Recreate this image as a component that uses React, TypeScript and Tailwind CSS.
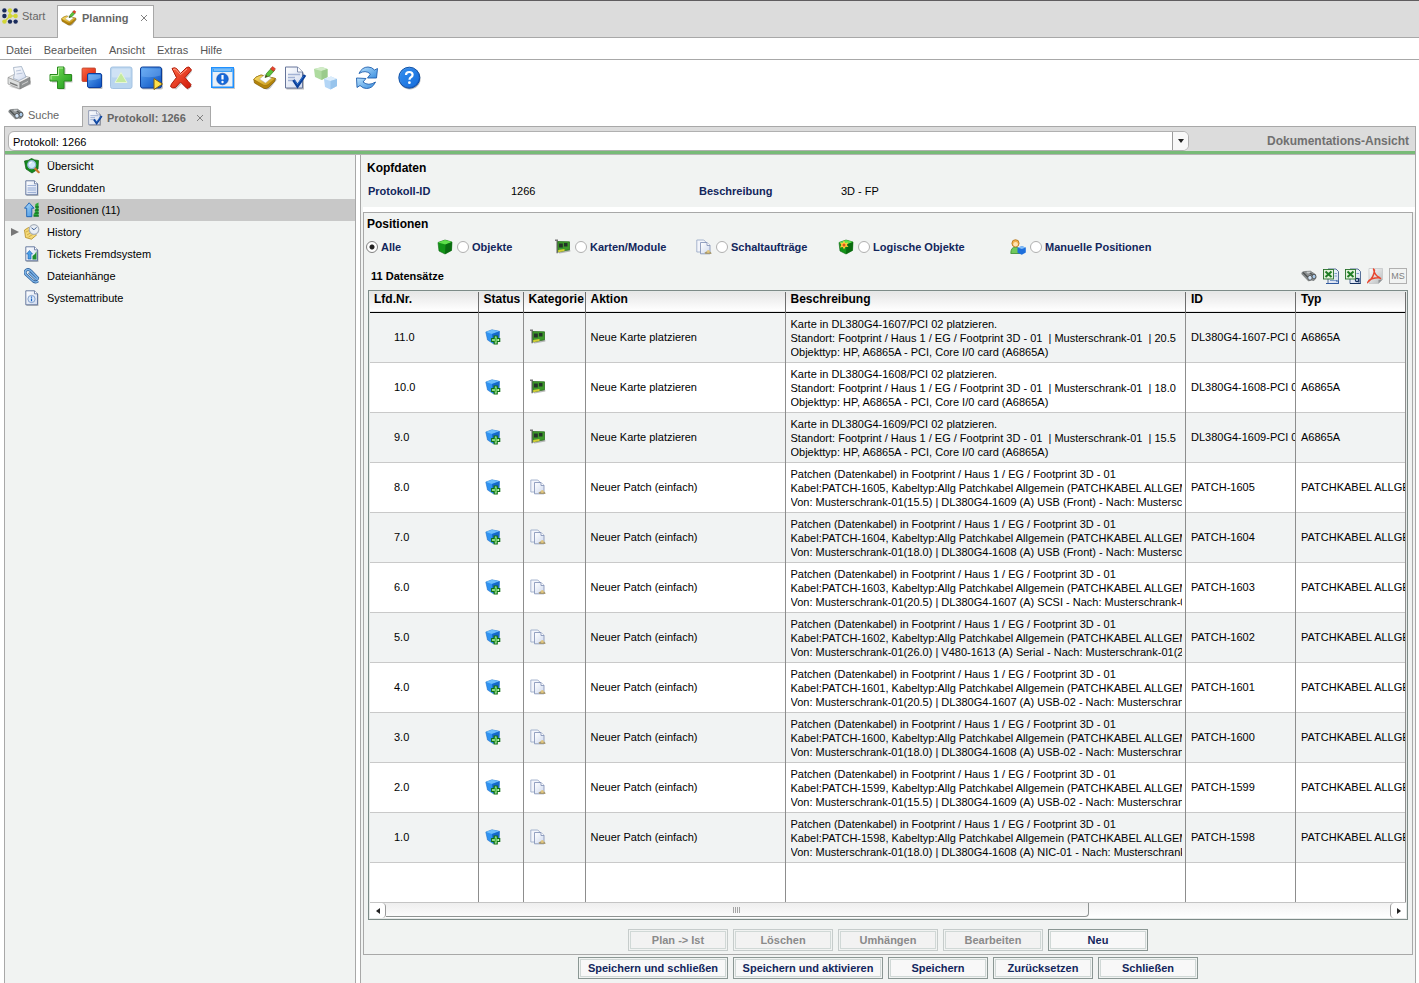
import { useState, type ReactNode } from "react";

function Svg({ size = 16, children }: { size?: 16 | 24; children: ReactNode }) {
  return (
    <svg
      viewBox={size === 24 ? "0 0 24 24" : "0 0 16 16"}
      className={size === 24 ? "block size-6 shrink-0" : "block size-4 shrink-0"}
      aria-hidden="true"
    >
      {children}
    </svg>
  );
}

function Gradient({ id, from, to }: { id: string; from: string; to: string }) {
  return (
    <linearGradient id={id} x1="0" y1="0" x2="1" y2="1">
      <stop offset="0" stopColor={from} />
      <stop offset="1" stopColor={to} />
    </linearGradient>
  );
}

function SharedGradients() {
  return (
    <svg className="absolute size-0" aria-hidden="true">
      <defs>
        <Gradient id="blue" from="#5aa5f2" to="#0a4fc0" />
        <Gradient id="sky" from="#b8e0fb" to="#3b8fe0" />
        <Gradient id="green" from="#7be05a" to="#1c9a1c" />
        <Gradient id="red" from="#ff6a45" to="#cf1708" />
        <Gradient id="paper" from="#ffffff" to="#cfd9ee" />
        <Gradient id="gold" from="#ffe673" to="#c08a08" />
        <Gradient id="metal" from="#ffffff" to="#b4b8ba" />
      </defs>
    </svg>
  );
}

/* ---------- Toolbar icons, 24px ---------- */

const PrinterIcon = () => (
  <Svg size={24}>
    <path d="M2 20.500l10 3 12-5v-4L13 19z" fill="#9b9b9b" opacity=".5" />
    <path d="M1 11.500l8-4 14 4-10 5z" fill="#f0f0f0" stroke="#999" strokeWidth=".6" />
    <path d="M1 11.500l12 5v6.500L1 18z" fill="#dcdede" stroke="#888" strokeWidth=".6" />
    <path d="M13 16.500l10-5v6L13 23z" fill="#8f9293" stroke="#777" strokeWidth=".6" />
    <path d="M6.500 1.500l8-1 4.500 10.500-7 3.500-5.500-2q2-5 0-11z" fill="url(#paper)" stroke="#8fa0b8" strokeWidth=".7" />
    <path d="M9 5l5-.8M9.500 8l6-.8" stroke="#b9c4d8" />
    <path d="M3 16l7.500 3v1.500l-7.500-3z" fill="#777" />
    <path d="M15 18.500l6-3" stroke="#d0d0d0" />
  </Svg>
);

const PlusIcon = () => (
  <Svg size={24}>
    <path d="M9.500 2h7v7h7v7.500h-7v7h-7v-7H3V9h6.500z" fill="#555" opacity=".35" />
    <path d="M8.500 1H15v7.500h7.500V15H15v7.500H8.500V15H1V8.500h7.500z" fill="url(#green)" stroke="#2a8a1e" />
    <path d="M2 13.500V9.500h7.500V2H14" fill="none" stroke="#b6f09e" />
  </Svg>
);

const CopySquaresIcon = () => (
  <Svg size={24}>
    <rect x="3" y="2" width="13.500" height="13.500" rx="1" fill="url(#red)" stroke="#b8452c" strokeWidth=".8" />
    <rect x="9.500" y="8.500" width="14" height="14.500" rx="1" fill="#555" opacity=".4" />
    <rect x="8.500" y="7.500" width="14" height="14" rx="1.500" fill="url(#blue)" stroke="#0c3fa0" />
    <path d="M9.500 9h12v3q-7 3-12 2z" fill="#a4d2fd" opacity=".4" />
  </Svg>
);

const UpDisabledIcon = () => (
  <Svg size={24}>
    <rect x="1.500" y="1" width="21.500" height="21.500" rx="2" fill="#b9d5ef" stroke="#a5c3e2" />
    <rect x="3" y="2.500" width="18.500" height="9" rx="1" fill="#cfe2f5" />
    <path d="M12 6.500l6 10H6z" fill="#c4ea9f" stroke="#e6f6d6" />
  </Svg>
);

const PlayIcon = () => (
  <Svg size={24}>
    <rect x="2.500" y="2" width="21.500" height="21.500" rx="2" fill="#555" opacity=".35" />
    <rect x="1.500" y="1" width="21" height="21" rx="2" fill="url(#blue)" stroke="#0c3d96" />
    <path d="M2.500 2.500H21.500v7q-9 3-19 1z" fill="#8fc4fa" opacity=".35" />
    <path d="M15 12.500l8.500 5.500-8.500 5.500z" fill="#ffe04a" stroke="#806010" />
  </Svg>
);

const DeleteIcon = () => (
  <Svg size={24}>
    <path d="M4 4.500l4-2 4.500 6 6.500-6 4 3-6 7.500 6 7.500-4 3.500-6.500-6-5.500 5.500-5-2.500 5.500-8z" fill="#555" opacity=".35" />
    <path
      d="M3 2.500q2.500-1.500 4.500 0l4 5 6-6 2.500-.5 2.500 3-6.500 7.500q3 4 6 7l-1 2.500-3 1.500-6.500-6.500-5 5.500q-3 1.500-5-1l1-2.500 5-6.500z"
      fill="url(#red)"
      stroke="#b01a08"
    />
    <path d="M4 3.500l2.500-.5 5 5.500L18 3" fill="none" stroke="#ffa088" />
  </Svg>
);

const AlertWindowIcon = () => (
  <Svg size={24}>
    <rect x="1.500" y="2.500" width="22.500" height="20.500" fill="#777" opacity=".4" />
    <rect x=".75" y="1.750" width="21.500" height="19.500" fill="#eaf0f6" stroke="#1e90ff" strokeWidth="1.500" />
    <path d="M1.500 2.500h20v3.500h-20z" fill="#3a9ff5" />
    <path d="M3 4h17" stroke="#b9dcfc" />
    <circle cx="11.500" cy="13" r="5.800" fill="#1668d8" stroke="#0d4cae" strokeWidth=".6" />
    <path d="M11.500 9v4.500" stroke="#fff" strokeWidth="2.200" />
    <circle cx="11.500" cy="16" r="1.200" fill="#fff" />
  </Svg>
);

const PencilNoteShapes = () => (
  <>
    <path d="M2 16.500l8-6 14 3-6.500 8.500q-2 2-4.500 1.500z" fill="#555" opacity=".4" />
    <path d="M.8 13.500Q1.500 11 8 9l14.500 3.500-1 3-6 6q-2 1.500-4.500 1l-9.500-5.500z" fill="#b58408" stroke="#7d5c08" strokeWidth=".7" />
    <path d="M.8 13.500Q1.500 11 8 9l14.500 3.500-7 6q-2 1.500-4.500 1z" fill="url(#gold)" stroke="#97700a" strokeWidth=".6" />
    <path d="M6.500 13l5.500-4.500 6.500 3.500-6 5z" fill="#fff" stroke="#a8a8a8" strokeWidth=".5" />
    <path d="M12 11.500l1.500-4 5-5.500 3 2.500-5 5.500z" fill="#5dc23c" stroke="#2b7d1b" strokeWidth=".7" />
    <path d="M17.500 3l2-2.500 3 2.300-2 2.500z" fill="#e8442c" stroke="#a82818" strokeWidth=".5" />
    <path d="M12 11.500l.9-2.500 2 1.500z" fill="#553a18" />
  </>
);

const PencilNoteIcon = () => (
  <Svg size={24}>
    <PencilNoteShapes />
  </Svg>
);

const CheckedDocShapes = () => (
  <>
    <path d="M3.500 2h12.500l5 5v16.500H3.500z" fill="#555" opacity=".4" />
    <path d="M2.500 1h12l5 5v16h-17z" fill="url(#paper)" stroke="#66759a" />
    <path d="M14.500 1v5h5" fill="#fff" stroke="#66759a" strokeWidth=".8" />
    <path d="M5 8.500h12M5 11.500h7M5 14.500h6" stroke="#a2b2d4" strokeWidth="1.500" />
    <path d="M10.500 14l4 6L22 9" fill="none" stroke="#0a3f98" strokeWidth="3" />
    <path d="M11.500 14.500l3 4L20.500 10" fill="none" stroke="#3a80dc" strokeWidth=".8" />
  </>
);

const CheckedDocIcon = () => (
  <Svg size={24}>
    <CheckedDocShapes />
  </Svg>
);

const CubesDisabledIcon = () => (
  <Svg size={24}>
    <path d="M1 3l8-2 5.500 2v8l-6 3L2 11z" fill="#aedb9f" />
    <path d="M1 3l8-2 5.500 2-6 2z" fill="#d2ecc8" />
    <path d="M8.500 5l6-2v8l-6 3z" fill="#9acb8b" />
    <path d="M11 13l7-2.500 6 2.500v7l-6.500 3.500L12 21z" fill="#b4d6f6" />
    <path d="M11 13l7-2.500 6 2.500-6.500 2z" fill="#dcedfc" />
    <path d="M17.500 15l6.500-2v7l-6.500 3.500z" fill="#98c4ec" />
  </Svg>
);

const RefreshIcon = () => (
  <Svg size={24}>
    <path
      d="M4 7.500Q7 1 13 1q4 0 6.500 3l3-1.500-1 9.500H12.500l3-4Q10.500 3.500 4 7.500z"
      fill="url(#sky)"
      stroke="#1f5fae"
      strokeWidth=".9"
      strokeLinejoin="round"
    />
    <path
      d="M20.500 16Q17.500 22.500 11.500 22.500 8 22.500 5 19.500L2 21.500l-.5-9.500 9.500.500-3 3.500q5.500 4.500 12.500 0z"
      fill="url(#sky)"
      stroke="#1f5fae"
      strokeWidth=".9"
      strokeLinejoin="round"
    />
  </Svg>
);

const HelpIcon = () => (
  <Svg size={24}>
    <circle cx="12.800" cy="12.700" r="10.800" fill="#555" opacity=".4" />
    <circle cx="12.300" cy="11.700" r="10.500" fill="url(#blue)" stroke="#0b50a8" />
    <circle cx="12.300" cy="11.700" r="9.300" fill="#1d80ec" opacity=".6" />
    <path d="M9 9q0-3 3.300-3t3.300 2.700q0 1.500-1.600 2.500-1.500 1-1.500 2.500" fill="none" stroke="#fff" strokeWidth="2.200" />
    <circle cx="12.400" cy="16.700" r="1.400" fill="#fff" />
  </Svg>
);

/* ---------- Small icons, 16px ---------- */

const startDots = [
  ["#1a2c5c", "#d2d638", "#1a2c5c"],
  ["#1a2c5c", "#d2d638", "#d2d638"],
  ["#d2d638", "#1a2c5c", "#1a2c5c"],
];

const StartIcon = () => (
  <Svg>
    <path d="M8 2.500v5.500h5.500M8 8L2.500 13.500" fill="none" stroke="#d2d638" strokeWidth="1.500" />
    {startDots.map((row, y) =>
      row.map((fill, x) => (
        <circle key={`${x}-${y}`} cx={2.400 + x * 5.600} cy={2.400 + y * 5.600} r="2.200" fill={fill} />
      )),
    )}
  </Svg>
);

const PlanningIcon = () => (
  <svg viewBox="0 0 24 24" className="block size-4 shrink-0" aria-hidden="true">
    <PencilNoteShapes />
  </svg>
);

const ProtocolIcon = () => (
  <svg viewBox="0 0 24 24" className="block size-4 shrink-0" aria-hidden="true">
    <CheckedDocShapes />
  </svg>
);

const BinocularsIcon = () => (
  <Svg>
    <path d="M.8 6Q.5 3.500 3.500 3.500l6-.3 5 3.300.5 3.500-2 2.500-3-.5-2.500 1z" fill="#8d9192" stroke="#6c7071" strokeWidth=".7" />
    <path d="M2 4.500l5 5M7 4l5 3" stroke="#4e5253" strokeWidth="1.300" />
    <ellipse cx="7.500" cy="4.400" rx="2" ry="1" fill="#c9cccd" />
    <ellipse cx="9" cy="9.800" rx="2.200" ry="2.400" fill="#cfe2f5" stroke="#555" strokeWidth=".9" />
    <ellipse cx="13" cy="8.600" rx="1.900" ry="2.300" fill="#a9c9e8" stroke="#555" strokeWidth=".9" />
  </Svg>
);

const OverviewIcon = () => (
  <Svg>
    <path d="M.5 3Q5 2.500 7.500.5q3 1.800 7 2L14 11l-6 4-6-4z" fill="#148a1d" stroke="#0c5a12" strokeWidth=".7" />
    <path d="M10.500 10l4.200 4.200" stroke="#c9742a" strokeWidth="2.200" strokeLinecap="round" />
    <circle cx="7.700" cy="6.700" r="4" fill="#cfe8fa" stroke="#8fb3d2" strokeWidth="1.200" />
    <path d="M5.500 6.200q.4-1.800 2.200-2" fill="none" stroke="#fff" strokeWidth="1.200" />
  </Svg>
);

const PageIcon = ({ children }: { children?: ReactNode }) => (
  <Svg>
    <path d="M2.500 1.500h9l3 3V16h-12z" fill="#555" opacity=".35" />
    <path d="M1.800.8h8.700l3 3v11H1.800z" fill="url(#paper)" stroke="#5b6f98" strokeWidth=".9" />
    <path d="M10.500.8v3h3" fill="#fff" stroke="#5b6f98" strokeWidth=".8" />
    {children}
  </Svg>
);

const BaseDataIcon = () => (
  <PageIcon>
    <path d="M3.500 5.500H12M3.500 12.500H12" stroke="#9fb2d6" />
    <rect x="3.500" y="7" width="8.500" height="4" fill="#bccbe6" />
  </PageIcon>
);

const PositionsIcon = () => (
  <Svg>
    <path d="M5.200.8l4.800 5.400H7.800v8.500H2.700V6.200H.5z" fill="url(#sky)" stroke="#145fb4" strokeWidth=".9" />
    <path d="M11.500 2l3-1.500v14H9.800L9.500 12l2-1.500-1-2 1.500-1.500-1-2z" fill="#2aa838" />
    <path d="M9.500 14h5.500M10.500 11h4.500M11 8h4M11.500 5H15" stroke="#0b5f18" strokeWidth="1.200" />
  </Svg>
);

const TicketsIcon = () => (
  <PageIcon>
    <path d="M5.500 4.500L8.500 8H7v5H4V8H2.500z" fill="#4a9fe6" stroke="#145fb4" strokeWidth=".6" />
    <path d="M12.500 5v8.500H8.500V10L11 8z" fill="#1d8f2c" />
  </PageIcon>
);

const HistoryIcon = () => (
  <Svg>
    <path d="M.5 6l4-2.500 8 7.500-5 4.200-6-1.700z" fill="#f3d876" stroke="#b48b20" strokeWidth=".8" />
    <path d="M2 8l4-2M3 11l5-3M4.500 13l5-3" stroke="#c49b35" strokeWidth=".7" />
    <circle cx="10" cy="5.500" r="4.800" fill="#e9eef4" stroke="#a8b0ba" strokeWidth="1.200" />
    <path d="M7.500 3.800l2.500 2 2.500-2.500" fill="none" stroke="#3d5f94" />
  </Svg>
);

const PaperclipIcon = () => (
  <Svg>
    <path
      d="M5 4.500l7 6.500q1.500.5 1.700-1L7 3Q4 .2 1.800 2.500q-1.500 2 .2 4l7 6.500q3 2 5 0"
      fill="none"
      stroke="#2e5f98"
      strokeWidth="2.800"
    />
    <path
      d="M5 4.500l7 6.500q1.500.5 1.700-1L7 3Q4 .2 1.800 2.500q-1.500 2 .2 4l7 6.500q3 2 5 0"
      fill="none"
      stroke="#7eb4e8"
      strokeWidth="1.500"
    />
  </Svg>
);

const SystemIcon = () => (
  <PageIcon>
    <circle cx="7.500" cy="9" r="3.600" fill="#dbe9fa" stroke="#6f90c0" strokeWidth=".8" />
    <path d="M7.500 8.500v2.800M7.500 6.500v1.200" stroke="#1a5fc0" strokeWidth="1.200" />
  </PageIcon>
);

const GreenCube = () => (
  <>
    <path d="M1 3.500L8 1l7 2-.5 8.500L8 15 2 12z" fill="#129417" stroke="#0b6410" strokeWidth=".6" />
    <path d="M1 3.500L8 1l7 2-6.500 2.500z" fill="#5fe04b" />
    <path d="M8.500 5.500L15 3l-.5 8.500L8 15z" fill="#0a6b10" />
  </>
);

const ObjectIcon = () => (
  <Svg>
    <GreenCube />
  </Svg>
);

const LogicalObjectIcon = () => (
  <Svg>
    <GreenCube />
    <path d="M6 1.500l1.200 2.500 3-.5-1.300 2.500L10.500 8l-3-.2L6 10.500 4.800 8 2 8.500 3.300 6 2 3.800l2.700.2z" fill="#ffc93c" />
    <circle cx="6" cy="6" r="1.500" fill="#e0551c" />
  </Svg>
);

const CardIcon = () => (
  <Svg>
    <path d="M0 1.300h2.200v13" fill="none" stroke="#777" strokeWidth="1.600" />
    <path d="M3.500 12.500l11-2 .8.800v1.200l-11 2z" fill="#777" opacity=".5" />
    <path d="M2.800 2.500l11.700.3v8l-4 .7-7.500 1.500z" fill="#3d9a2a" stroke="#1f6414" strokeWidth=".7" />
    <rect x="4" y="4.500" width="3.800" height="4" fill="#24342a" />
    <rect x="9" y="4" width="3.500" height="3.500" fill="#24342a" />
    <path d="M3.200 11l6.300-.9v2l-6.300 1.200z" fill="#d6d036" />
  </Svg>
);

const OrderIcon = () => (
  <Svg>
    <path d="M.8 1h7l2 2v10h-9z" fill="#f3f5fb" stroke="#93a3c4" strokeWidth=".8" />
    <path d="M4.500 3.500H11l3 3v8.300H4.500z" fill="url(#paper)" stroke="#7b8cb2" strokeWidth=".8" />
    <path d="M11 3.500v3h3" fill="#fff" stroke="#7b8cb2" strokeWidth=".8" />
    <path d="M8.500 13.500l3-1.500 3.500 1 .5 2h-6z" fill="#a89a74" />
    <circle cx="12.300" cy="12.500" r="1.500" fill="#e0c47c" />
  </Svg>
);

const ManualIcon = () => (
  <Svg>
    <path d="M.8 14.500Q.8 8 5.500 8t5 6.500z" fill="#6fc95c" stroke="#388a2c" strokeWidth=".8" />
    <circle cx="5.500" cy="4.300" r="3.600" fill="#f0b04c" stroke="#b2721b" strokeWidth=".8" />
    <circle cx="5.600" cy="5.200" r="2.300" fill="#ffe2b2" />
    <path d="M7.500 8.500L12 7.200l3.800 1.300v5l-4 2.200-4.300-2z" fill="#1e6fdc" />
    <path d="M7.500 8.500L12 7.200l3.800 1.300-4 1.500z" fill="#82bdf8" />
  </Svg>
);

const NewCubeIcon = () => (
  <Svg>
    <path d="M.8 3L7 .8l7.500 1.500-.5 9.200L8 14.500 2.500 11z" fill="#2f92f2" stroke="#1467bd" strokeWidth=".5" />
    <path d="M.8 3L7 .8l7.500 1.500L7 5z" fill="#6cbcfb" />
    <path d="M7 5l7.500-2.700-.5 9.200-6 3z" fill="#1668cc" />
    <path d="M9.200 7h3v2.500h2.500v3h-2.500V15h-3v-2.500H6.700v-3h2.500z" fill="#c9f5b9" stroke="#0c6f12" strokeWidth="1.200" />
    <path d="M10.700 8.500V13.500M8.200 11h5" stroke="#3fb43a" strokeWidth="1" />
  </Svg>
);

const Spreadsheet = ({ children }: { children: ReactNode }) => (
  <Svg>
    <path d="M5 1h8l2.500 2.500v12H5z" fill="url(#paper)" stroke="#46628f" strokeWidth=".9" />
    {children}
    <rect x=".5" y="1.500" width="10" height="9.500" fill="#e4f2dc" stroke="#27702a" strokeWidth=".9" />
    <path d="M2.500 3.500l6 5.500M8.500 3.500l-6 5.500" stroke="#1f7d24" strokeWidth="2" />
  </Svg>
);

const ExcelIcon = () => (
  <Spreadsheet>
    <path d="M11.500 5.500H14M11.500 8H14M7 12.500h7" stroke="#7f9dcb" />
    <path d="M13 13h2.500v2.500H3" fill="none" stroke="#2f59a0" />
  </Spreadsheet>
);

const ExcelAllIcon = () => (
  <Spreadsheet>
    <path d="M11.500 5.500H14" stroke="#7f9dcb" />
    <circle cx="12" cy="12" r="1.600" fill="none" stroke="#14315f" strokeWidth="1.200" />
    <path d="M13.900 10v4.500M5 15.500h10.500" stroke="#14315f" strokeWidth="1.200" />
  </Spreadsheet>
);

const PdfIcon = () => (
  <Svg>
    <path d="M2 .5h13.500v11l-4 4H2z" fill="url(#metal)" stroke="#c2c4c6" strokeWidth=".7" />
    <path d="M15.500 11.500l-4 4v-3.500z" fill="#8f9395" />
    <path
      d="M6.500 1q1 6.500 7 9.500M7.500 2Q7 9.500 1 14q1.500-4 11.500-4.500"
      fill="none"
      stroke="#e8452e"
      strokeWidth="1.500"
      strokeLinecap="round"
    />
  </Svg>
);

/* ---------- Data ---------- */

type Row = {
  nr: string;
  kind: "card" | "patch";
  aktion: string;
  lines: [string, string, string];
  id: string;
  typ: string;
};

const card = (nr: string, device: string, unit: string): Row => ({
  nr,
  kind: "card",
  aktion: "Neue Karte platzieren",
  lines: [
    `Karte in ${device}/PCI 02 platzieren.`,
    `Standort: Footprint / Haus 1 / EG / Footprint 3D - 01  | Musterschrank-01  | ${unit}`,
    "Objekttyp: HP, A6865A - PCI, Core I/0 card (A6865A)",
  ],
  id: `${device}-PCI 02`,
  typ: "A6865A",
});

const patch = (nr: string, cable: string, route: string): Row => ({
  nr,
  kind: "patch",
  aktion: "Neuer Patch (einfach)",
  lines: [
    "Patchen (Datenkabel) in Footprint / Haus 1 / EG / Footprint 3D - 01",
    `Kabel:PATCH-${cable}, Kabeltyp:Allg Patchkabel Allgemein (PATCHKABEL ALLGEME`,
    `Von: Musterschrank-01${route}`,
  ],
  id: `PATCH-${cable}`,
  typ: "PATCHKABEL ALLGE",
});

const rows: Row[] = [
  card("11.0", "DL380G4-1607", "20.5"),
  card("10.0", "DL380G4-1608", "18.0"),
  card("9.0", "DL380G4-1609", "15.5"),
  patch("8.0", "1605", "(15.5) | DL380G4-1609 (A) USB (Front) - Nach: Mustersc"),
  patch("7.0", "1604", "(18.0) | DL380G4-1608 (A) USB (Front) - Nach: Mustersc"),
  patch("6.0", "1603", "(20.5) | DL380G4-1607 (A) SCSI - Nach: Musterschrank-0"),
  patch("5.0", "1602", "(26.0) | V480-1613 (A) Serial - Nach: Musterschrank-01(2"),
  patch("4.0", "1601", "(20.5) | DL380G4-1607 (A) USB-02 - Nach: Musterschran"),
  patch("3.0", "1600", "(18.0) | DL380G4-1608 (A) USB-02 - Nach: Musterschran"),
  patch("2.0", "1599", "(15.5) | DL380G4-1609 (A) USB-02 - Nach: Musterschran"),
  patch("1.0", "1598", "(18.0) | DL380G4-1608 (A) NIC-01 - Nach: Musterschrank"),
];

const toolbar: { label: string; icon: ReactNode; disabled?: boolean }[][] = [
  [{ label: "Drucken", icon: <PrinterIcon /> }],
  [
    { label: "Neu", icon: <PlusIcon /> },
    { label: "Kopieren", icon: <CopySquaresIcon /> },
    { label: "Nach oben", icon: <UpDisabledIcon />, disabled: true },
    { label: "Ausführen", icon: <PlayIcon /> },
    { label: "Löschen", icon: <DeleteIcon /> },
  ],
  [{ label: "Hinweise", icon: <AlertWindowIcon /> }],
  [
    { label: "Planung", icon: <PencilNoteIcon /> },
    { label: "Protokoll", icon: <CheckedDocIcon /> },
    { label: "Objekte", icon: <CubesDisabledIcon />, disabled: true },
  ],
  [{ label: "Aktualisieren", icon: <RefreshIcon /> }],
  [{ label: "Hilfe", icon: <HelpIcon /> }],
];

const navigation: { label: string; icon: ReactNode; expandable?: boolean }[] = [
  { label: "Übersicht", icon: <OverviewIcon /> },
  { label: "Grunddaten", icon: <BaseDataIcon /> },
  { label: "Positionen (11)", icon: <PositionsIcon /> },
  { label: "History", icon: <HistoryIcon />, expandable: true },
  { label: "Tickets Fremdsystem", icon: <TicketsIcon /> },
  { label: "Dateianhänge", icon: <PaperclipIcon /> },
  { label: "Systemattribute", icon: <SystemIcon /> },
];

const filters: { label: string; icon?: ReactNode }[] = [
  { label: "Alle" },
  { label: "Objekte", icon: <ObjectIcon /> },
  { label: "Karten/Module", icon: <CardIcon /> },
  { label: "Schaltaufträge", icon: <OrderIcon /> },
  { label: "Logische Objekte", icon: <LogicalObjectIcon /> },
  { label: "Manuelle Positionen", icon: <ManualIcon /> },
];

const columns = ["Lfd.Nr.", "Status", "Kategorie", "Aktion", "Beschreibung", "ID", "Typ"];

/* ---------- Parts ---------- */

function CloseButton() {
  return (
    <button type="button" aria-label="Schließen" className="flex size-3 items-center justify-center">
      <svg viewBox="0 0 8 8" className="size-2" aria-hidden="true">
        <path d="M1 1l6 6M7 1L1 7" stroke="#808080" strokeWidth="1" />
      </svg>
    </button>
  );
}

function ActionButton({ label, wide, disabled }: { label: string; wide?: boolean; disabled?: boolean }) {
  return (
    <button
      type="button"
      disabled={disabled}
      className={`${wide ? "w-[150px]" : "w-[100px]"} h-[22px] border p-px font-bold whitespace-nowrap ${
        disabled ? "border-[#c6cccb] text-[#8a8a8a]" : "border-[#8b9794] text-[#12265c]"
      }`}
    >
      <span
        className={`flex h-full items-center justify-center border border-[#d0d8d6] ${
          disabled ? "bg-[#f2f2f2]" : "bg-[#f8f8f8]"
        }`}
      >
        {label}
      </span>
    </button>
  );
}

function Positions() {
  return (
    <div className="border border-[#7d8b88] bg-[#e6e9e8] p-px">
      <div className="overflow-hidden">
        <table className="w-full table-fixed border-collapse text-left">
          <colgroup>
            <col className="w-[108px]" />
            <col className="w-[45px]" />
            <col className="w-[62px]" />
            <col className="w-[200px]" />
            <col />
            <col className="w-[110px]" />
            <col className="w-[110px]" />
          </colgroup>
          <thead>
            <tr className="h-5 border-b border-black bg-linear-to-b from-[#e6e6e6] to-white">
              {columns.map((c, i) => (
                <th
                  key={c}
                  scope="col"
                  className={`overflow-hidden border-r border-[#6e6e6e] p-0 align-top text-[12px] font-bold whitespace-nowrap ${
                    i === 0 ? "pl-1" : "pl-[5px]"
                  }`}
                >
                  {c}
                </th>
              ))}
            </tr>
          </thead>
          <tbody>
            {rows.map((r) => (
              <tr key={r.nr} className="h-[50px] border-b border-[#c9c9c9] odd:bg-[#f1f3f3] even:bg-white">
                <td className="border-r border-[#8d8d8d] p-0 pl-6">{r.nr}</td>
                <td className="border-r border-[#8d8d8d] p-0 pl-1.5">
                  <NewCubeIcon />
                </td>
                <td className="border-r border-[#8d8d8d] p-0 pl-1.5">
                  {r.kind === "card" ? <CardIcon /> : <OrderIcon />}
                </td>
                <td className="border-r border-[#8d8d8d] p-0 pl-[5px]">{r.aktion}</td>
                <td className="border-r border-[#8d8d8d] p-0 pr-[3px] pl-[5px]">
                  <div className="pt-px">
                    {r.lines.map((l) => (
                      <div key={l} className="overflow-hidden whitespace-pre">
                        {l}
                      </div>
                    ))}
                  </div>
                </td>
                <td className="overflow-hidden border-r border-[#8d8d8d] p-0 pl-[5px] whitespace-nowrap">{r.id}</td>
                <td className="overflow-hidden border-r border-[#8d8d8d] p-0 pl-[5px] whitespace-nowrap">{r.typ}</td>
              </tr>
            ))}
            <tr className="h-10 bg-white" aria-hidden="true">
              {columns.map((c) => (
                <td key={c} className="border-r border-[#8d8d8d] p-0" />
              ))}
            </tr>
          </tbody>
        </table>
        <div className="flex h-4 border-t border-[#c4c4c4] bg-linear-to-b from-[#f2f2f2] to-white">
          <button
            type="button"
            aria-label="Nach links"
            className="flex w-4 items-center justify-center rounded-r-sm border-r border-[#9a9a9a] bg-white"
          >
            <svg viewBox="0 0 4 6" className="h-1.5 w-1" aria-hidden="true">
              <path d="M4 0v6L0 3z" fill="#222" />
            </svg>
          </button>
          <div className="flex-1">
            <div className="flex h-3.5 w-[70%] items-center justify-center gap-px rounded-br-sm border-r border-b border-[#8f9392] bg-linear-to-b from-[#eeeeee] to-[#fbfbfb]">
              <span className="h-1.5 w-px bg-[#a5a5a5]" />
              <span className="h-1.5 w-px bg-[#a5a5a5]" />
              <span className="h-1.5 w-px bg-[#a5a5a5]" />
              <span className="h-1.5 w-px bg-[#a5a5a5]" />
            </div>
          </div>
          <button
            type="button"
            aria-label="Nach rechts"
            className="flex w-4 items-center justify-center rounded-l-sm border-l border-[#9a9a9a] bg-white"
          >
            <svg viewBox="0 0 4 6" className="h-1.5 w-1" aria-hidden="true">
              <path d="M0 0v6l4-3z" fill="#222" />
            </svg>
          </button>
        </div>
      </div>
    </div>
  );
}

export default function App() {
  const [active, setActive] = useState("Positionen (11)");
  const [filter, setFilter] = useState("Alle");

  return (
    <div className="flex min-h-screen flex-col bg-white font-['Liberation_Sans',Arial,sans-serif] text-[11px] leading-[14px] text-black">
      <SharedGradients />

      <div className="flex h-[38px] items-end border-t border-b border-t-[#5f5d5f] border-b-[#a8a8a8] bg-[#dcdcdc] text-[#666666]">
        <a href="#start" className="flex h-8 w-[57px] items-start gap-1 pt-[3px] pl-0.5">
          <StartIcon />
          <span className="pt-px">Start</span>
        </a>
        <div className="-mb-px flex h-[33px] items-center gap-1 border border-b-0 border-[#a8a8a8] bg-white px-[3px] pb-[9px]">
          <PlanningIcon />
          <a href="#planning" className="pl-px pr-1.5 font-bold">
            Planning
          </a>
          <CloseButton />
        </div>
      </div>

      <nav className="flex h-[22px] items-center gap-3 border-b border-[#a8a8a8] pt-0.5 pl-1.5 text-[#555555]">
        {["Datei", "Bearbeiten", "Ansicht", "Extras", "Hilfe"].map((m) => (
          <button key={m} type="button">
            {m}
          </button>
        ))}
      </nav>

      <div className="flex h-[46px] items-start gap-[18px] pt-1.5 pl-[7px]">
        {toolbar.map((group, i) => (
          <div key={i} className="flex gap-1.5">
            {group.map((t) => (
              <button key={t.label} type="button" aria-label={t.label} disabled={t.disabled}>
                {t.icon}
              </button>
            ))}
          </div>
        ))}
      </div>

      <div className="flex h-5 items-stretch text-[#666666]">
        <a href="#suche" className="flex w-[82px] items-center gap-1 pb-1 pl-2">
          <BinocularsIcon />
          <span className="pt-0.5">Suche</span>
        </a>
        <div className="relative z-10 -mb-px flex items-center gap-1 border border-b-0 border-[#a8a8a8] bg-[#dcdcdc] px-1 pt-0.5">
          <ProtocolIcon />
          <a href="#protokoll" className="pr-1 font-bold">
            Protokoll: 1266
          </a>
          <CloseButton />
        </div>
      </div>

      <div className="mr-[3px] ml-1 flex flex-1 flex-col border-x border-t border-[#a8a8a8]">
        <header className="flex h-[27px] items-end border-b-[3px] border-[#78bb78] bg-[#dcdcdc]">
          <div className="ml-[3px] flex h-5 flex-1 overflow-hidden rounded-md border border-[#b0b0b0] bg-white">
            <select aria-label="Protokoll" className="flex-1 appearance-none pt-px pl-1 outline-none">
              <option>Protokoll: 1266</option>
            </select>
            <span className="flex w-4 items-center justify-center border-l border-[#9a9a9a] bg-[#f8f8f8]">
              <svg viewBox="0 0 6 4" className="h-1 w-1.5" aria-hidden="true">
                <path d="M0 0h6L3 4z" fill="#222" />
              </svg>
            </span>
          </div>
          <h1 className="w-[226px] pr-1.5 pb-[3px] text-right text-[12px] font-bold text-[#707070]">
            Dokumentations-Ansicht
          </h1>
        </header>

        <div className="flex flex-1 border-t border-[#b4b4b4]">
          <nav className="w-[351px] shrink-0 border-r border-[#a8a8a8] bg-[#f1f3f2]">
            {navigation.map((n) => (
              <button
                key={n.label}
                type="button"
                onClick={() => setActive(n.label)}
                className={`flex h-[22px] w-full items-center text-left ${active === n.label ? "bg-[#c8c8c8]" : ""}`}
              >
                <span className="flex w-[19px] pl-1.5">
                  {n.expandable && (
                    <svg viewBox="0 0 8 8" className="size-2" aria-hidden="true">
                      <path d="M0 0l8 4-8 4z" fill="#777" />
                    </svg>
                  )}
                </span>
                {n.icon}
                <span className="pl-[7px]">{n.label}</span>
              </button>
            ))}
          </nav>

          <main className="ml-1 flex min-w-0 flex-1 flex-col border-l border-[#a8a8a8] bg-[#f1f3f2] pl-0.5">
            <section className="h-[57px] border-b-[5px] border-white pt-1.5 pl-1">
              <h2 className="text-[12px] font-bold">Kopfdaten</h2>
              <dl className="grid grid-cols-[143px_188px_142px_1fr] pt-[9px] pl-px">
                <dt className="font-bold text-[#12265c]">Protokoll-ID</dt>
                <dd>1266</dd>
                <dt className="font-bold text-[#12265c]">Beschreibung</dt>
                <dd>3D - FP</dd>
              </dl>
            </section>

            <section className="mr-0.5 border border-[#a8a8a8]">
              <h2 className="pt-1 pl-[3px] text-[12px] font-bold">Positionen</h2>
              <fieldset className="grid grid-cols-[71px_118px_141px_142px_172px_auto] pt-2 pl-0.5">
                {filters.map((f) => (
                  <label key={f.label} className="flex h-4 items-center font-bold whitespace-nowrap text-[#12265c]">
                    {f.icon}
                    <input
                      type="radio"
                      name="filter"
                      checked={filter === f.label}
                      onChange={() => setFilter(f.label)}
                      className={`size-3 appearance-none rounded-full border border-[#b0b0b0] bg-white checked:border-[#808080] checked:bg-[radial-gradient(circle,#222_2px,white_3px)] ${
                        f.icon ? "ml-1" : ""
                      }`}
                    />
                    <span className="pl-[3px]">{f.label}</span>
                  </label>
                ))}
              </fieldset>

              <div className="flex items-center justify-between pt-[13px] pr-[5px] pb-1.5 pl-[7px]">
                <h3 className="font-bold">11 Datensätze</h3>
                <div className="flex h-4 items-center gap-1.5">
                  <button type="button" aria-label="Suchen">
                    <BinocularsIcon />
                  </button>
                  <button type="button" aria-label="Excel-Export">
                    <ExcelIcon />
                  </button>
                  <button type="button" aria-label="Excel-Export alle">
                    <ExcelAllIcon />
                  </button>
                  <button type="button" aria-label="PDF-Export">
                    <PdfIcon />
                  </button>
                  <button
                    type="button"
                    className="flex h-4 w-[18px] items-center justify-center border border-[#b0b0b0] text-[9px] text-[#808080]"
                  >
                    MS
                  </button>
                </div>
              </div>

              <div className="px-1">
                <Positions />
              </div>

              <div className="flex justify-center gap-[5px] pt-[9px] pb-[3px]">
                <ActionButton label="Plan -> Ist" disabled />
                <ActionButton label="Löschen" disabled />
                <ActionButton label="Umhängen" disabled />
                <ActionButton label="Bearbeiten" disabled />
                <ActionButton label="Neu" />
              </div>
            </section>

            <div className="mr-0.5 flex justify-center gap-[5px] pt-0.5">
              <ActionButton label="Speichern und schließen" wide />
              <ActionButton label="Speichern und aktivieren" wide />
              <ActionButton label="Speichern" />
              <ActionButton label="Zurücksetzen" />
              <ActionButton label="Schließen" />
            </div>
          </main>
        </div>
      </div>
    </div>
  );
}
